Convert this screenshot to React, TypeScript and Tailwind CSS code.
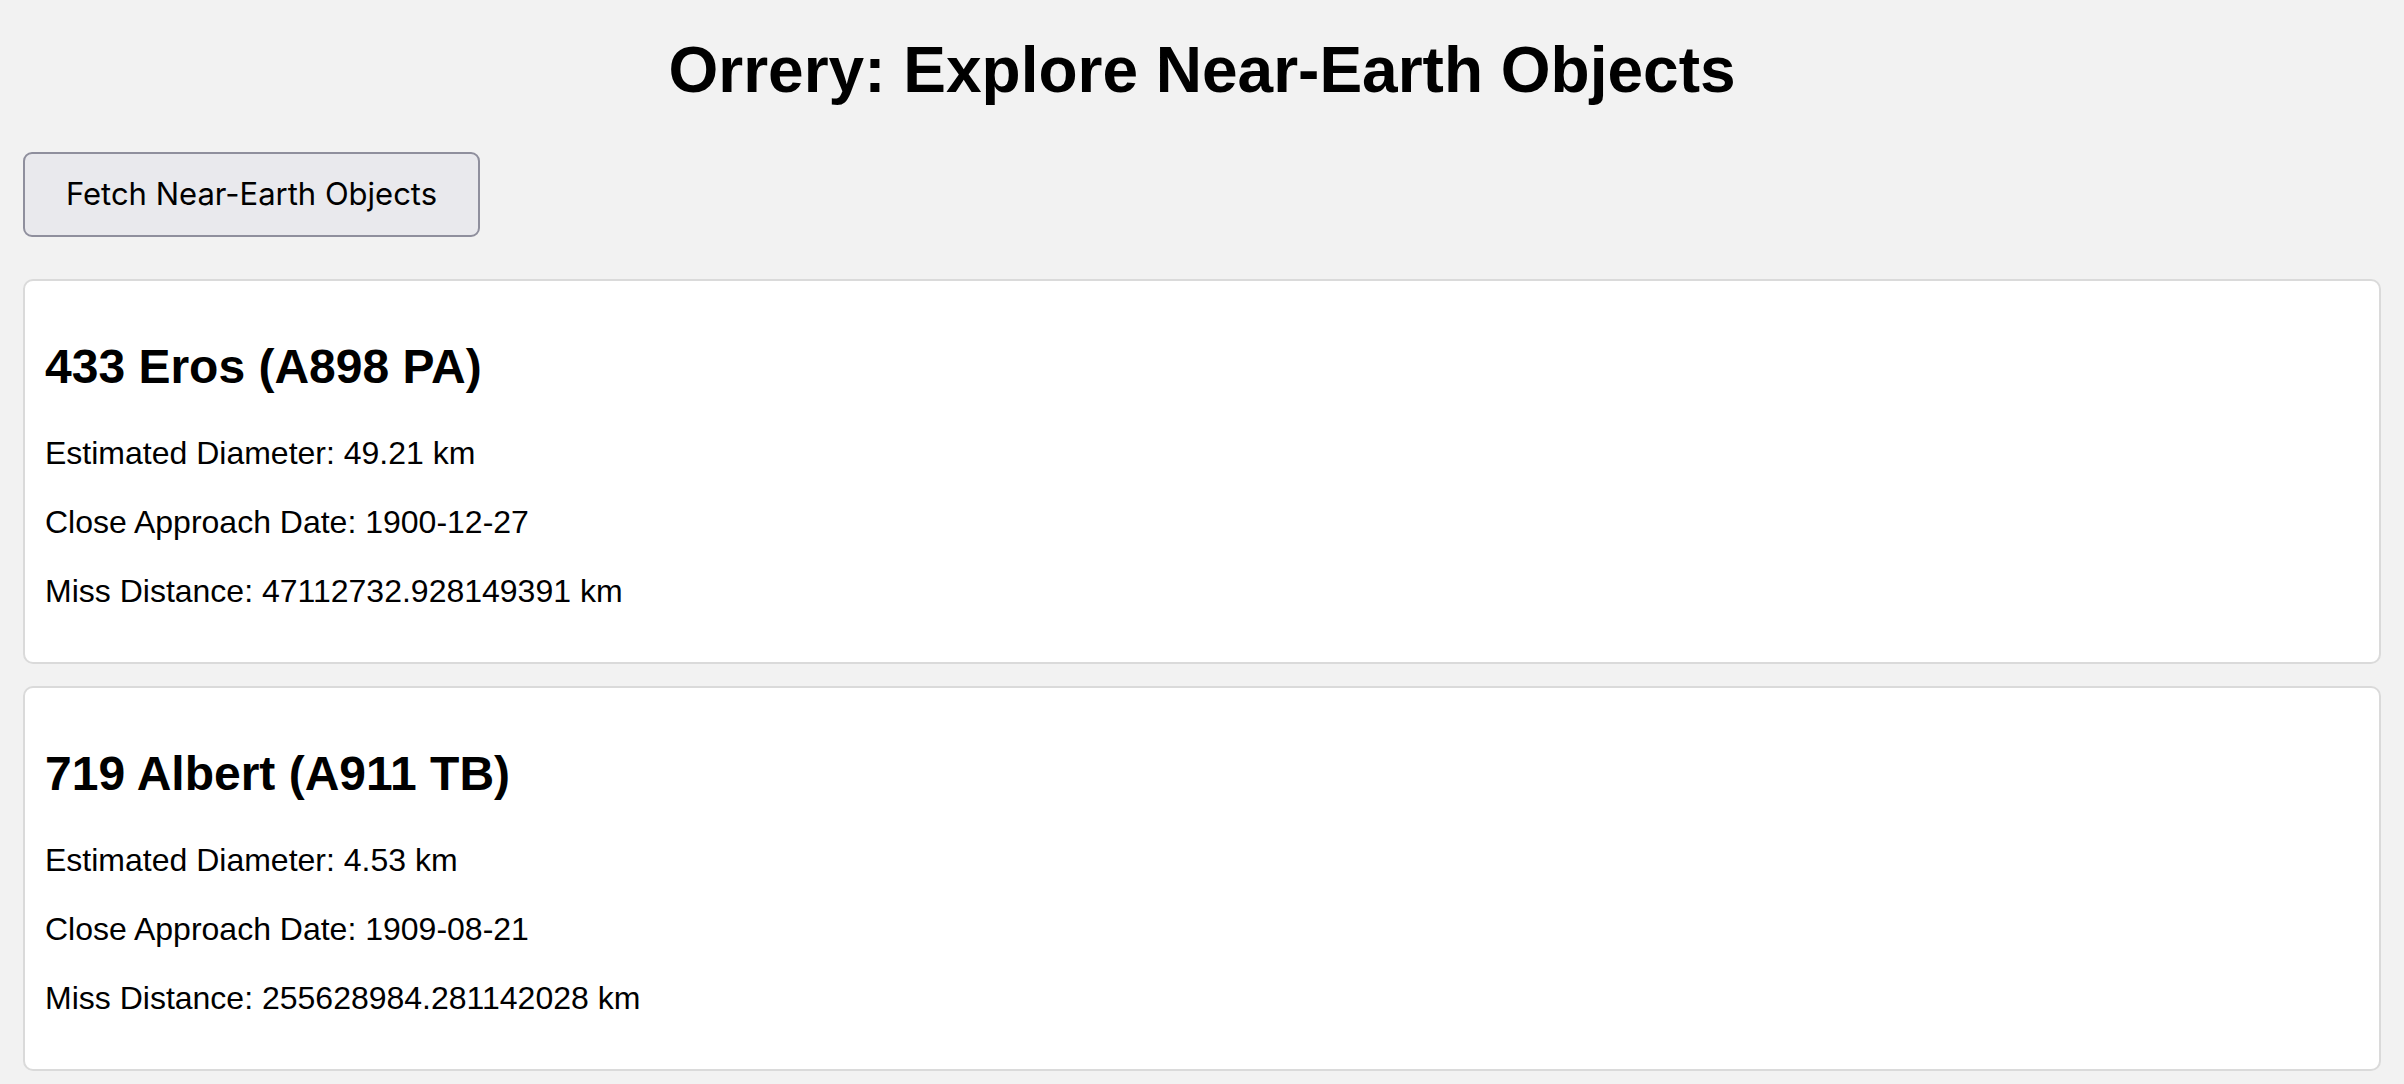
const neos = [
  {
    id: "2000433",
    name: "433 Eros (A898 PA)",
    diameter: "49.21",
    date: "1900-12-27",
    miss: "47112732.928149391",
  },
  {
    id: "2000719",
    name: "719 Albert (A911 TB)",
    diameter: "4.53",
    date: "1909-08-21",
    miss: "255628984.281142028",
  },
];

const NeoCard = ({ neo }: { neo: (typeof neos)[number] }) => (
  <div className="bg-white border-2 border-[#dadada] rounded-[10px] px-[20px] pt-[20px] pb-[20px]">
    <h2 className="mt-[38px] mb-[41px] text-[48px] leading-[55px] font-bold">{neo.name}</h2>
    <p className="mb-[32px] text-[32px] leading-[37px]">Estimated Diameter: {neo.diameter} km</p>
    <p className="mb-[32px] text-[32px] leading-[37px]">Close Approach Date: {neo.date}</p>
    <p className="mb-[32px] text-[32px] leading-[37px]">Miss Distance: {neo.miss} km</p>
  </div>
);

export default function App() {
  return (
    <div className="min-h-screen bg-[#f2f2f2] text-black px-[23px] pb-[20px] font-['Liberation_Sans',Arial,sans-serif]">
      <h1 className="pt-[33px] text-center text-[64px] leading-[74px] font-bold">
        Orrery: Explore Near-Earth Objects
      </h1>

      <button
        type="button"
        className="mt-[45px] h-[85px] w-[457px] flex items-center justify-center rounded-[9px] border-2 border-[#8f8f9d] bg-[#e9e9ed] text-[31px] text-black font-['Inter',sans-serif]"
      >
        Fetch Near-Earth Objects
      </button>

      <div className="mt-[42px] flex flex-col gap-[22px]">
        {neos.map((neo) => (
          <NeoCard key={neo.id} neo={neo} />
        ))}
      </div>
    </div>
  );
}
